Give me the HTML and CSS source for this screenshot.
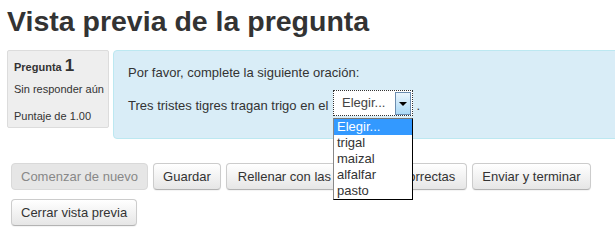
FILE: index.html
```
<!DOCTYPE html>
<html lang="es">
<head>
    <meta charset="UTF-8">
    <title>Vista previa de la pregunta</title>
    <link rel="stylesheet" href="styles.css">
</head>
<body>
    <h1 class="page-title">Vista previa de la pregunta</h1>

    <div class="question">
        <div class="info">
            <h3 class="qno">Pregunta <span class="num">1</span></h3>
            <div class="state">Sin responder aún</div>
            <div class="grade">Puntaje de 1.00</div>
        </div>
        <div class="content">
            <div class="qtext">Por favor, complete la siguiente oración:</div>
            <div class="qtext">Tres tristes tigres tragan trigo en el
                <span class="select-wrap">
                    <span class="select">
                        <span class="select-value">Elegir...</span>
                        <span class="select-arrow"></span>
                    </span>
                    <ul class="select-list">
                        <li class="selected">Elegir...</li>
                        <li>trigal</li>
                        <li>maizal</li>
                        <li>alfalfar</li>
                        <li>pasto</li>
                    </ul>
                </span> .
            </div>
        </div>
    </div>

    <div class="controls">
        <button class="btn" disabled>Comenzar de nuevo</button>
        <button class="btn">Guardar</button>
        <button class="btn btn-wide">Rellenar con las respuestas correctas</button>
        <button class="btn">Enviar y terminar</button>
        <button class="btn">Cerrar vista previa</button>
    </div>
</body>
</html>
```

FILE: styles.css
```
* {
    margin: 0;
    padding: 0;
    box-sizing: border-box;
}

body {
    font-family: "Liberation Sans", Arial, sans-serif;
    color: #333;
    background-color: #fff;
    padding: 0 0 0 7px;
    overflow: hidden;
    width: 615px;
    height: 242px;
}

.page-title {
    font-size: 28.5px;
    font-weight: bold;
    line-height: 36px;
    height: 50px;
    padding-top: 3px;
}

.question {
    display: flex;
    align-items: flex-start;
    width: 640px;
}

.info {
    width: 102px;
    height: 78px;
    background-color: #eee;
    border: 1px solid #dcdcdc;
    border-radius: 2px;
    padding: 7px 0 0 6px;
    font-size: 11px;
}

.qno {
    font-size: 11px;
    font-weight: bold;
    line-height: 16px;
}

.qno .num {
    font-size: 17px;
}

.state {
    margin-top: 7px;
    line-height: 14px;
}

.grade {
    margin-top: 13px;
    line-height: 14px;
}

.content {
    flex: 1;
    margin-left: 4px;
    height: 89px;
    background-color: #d9edf7;
    border: 1px solid #bce8f1;
    border-radius: 4px;
    padding: 13px 0 0 14px;
    font-size: 13px;
}

.qtext {
    line-height: 18px;
    margin-bottom: 14px;
}

.select-wrap {
    position: relative;
    top: -2px;
    display: inline-block;
    vertical-align: middle;
    margin: -4px 0 0 1px;
}

.select {
    display: flex;
    align-items: center;
    width: 80px;
    height: 26px;
    background-color: #fff;
    border: 1px dotted #333;
    padding: 1px 1px 1px 0;
}

.select-value {
    flex: 1;
    padding-left: 8px;
    font-size: 13px;
    color: #444;
}

.select-arrow {
    position: relative;
    width: 16px;
    height: 23px;
    border: 1px solid #6c8db0;
    background: linear-gradient(#eaf5fd, #a9d8f6);
}

.select-arrow::after {
    content: "";
    position: absolute;
    left: 3px;
    top: 9px;
    border-left: 4px solid transparent;
    border-right: 4px solid transparent;
    border-top: 4px solid #000;
}

.select-list {
    position: absolute;
    left: 0;
    top: 28px;
    width: 80px;
    list-style-type: none;
    background-color: #fff;
    border: 1px solid #000;
    border-top-color: #777;
    border-left-color: #888;
    z-index: 2;
}

.select-list li {
    font-size: 13px;
    line-height: 16px;
    height: 16px;
    padding-left: 3px;
    color: #333;
}

.select-list li.selected {
    background-color: #3399ff;
    color: #fff;
}

.controls {
    display: flex;
    flex-wrap: wrap;
    gap: 9px 5px;
    width: 600px;
    margin-top: 24px;
    padding-left: 4px;
}

.btn {
    font-family: "Liberation Sans", Arial, sans-serif;
    font-size: 13px;
    color: #333;
    height: 27px;
    padding: 0 9px;
    border: 1px solid #ccc;
    border-bottom-color: #b3b3b3;
    border-radius: 4px;
    background: linear-gradient(#ffffff, #e6e6e6);
    box-shadow: 0 1px 1px rgba(0, 0, 0, 0.05);
}

.btn-wide {
    padding: 0 11px;
}

.btn:disabled {
    background: #e6e6e6;
    color: #888;
    box-shadow: none;
    border-color: #d9d9d9;
}
```
